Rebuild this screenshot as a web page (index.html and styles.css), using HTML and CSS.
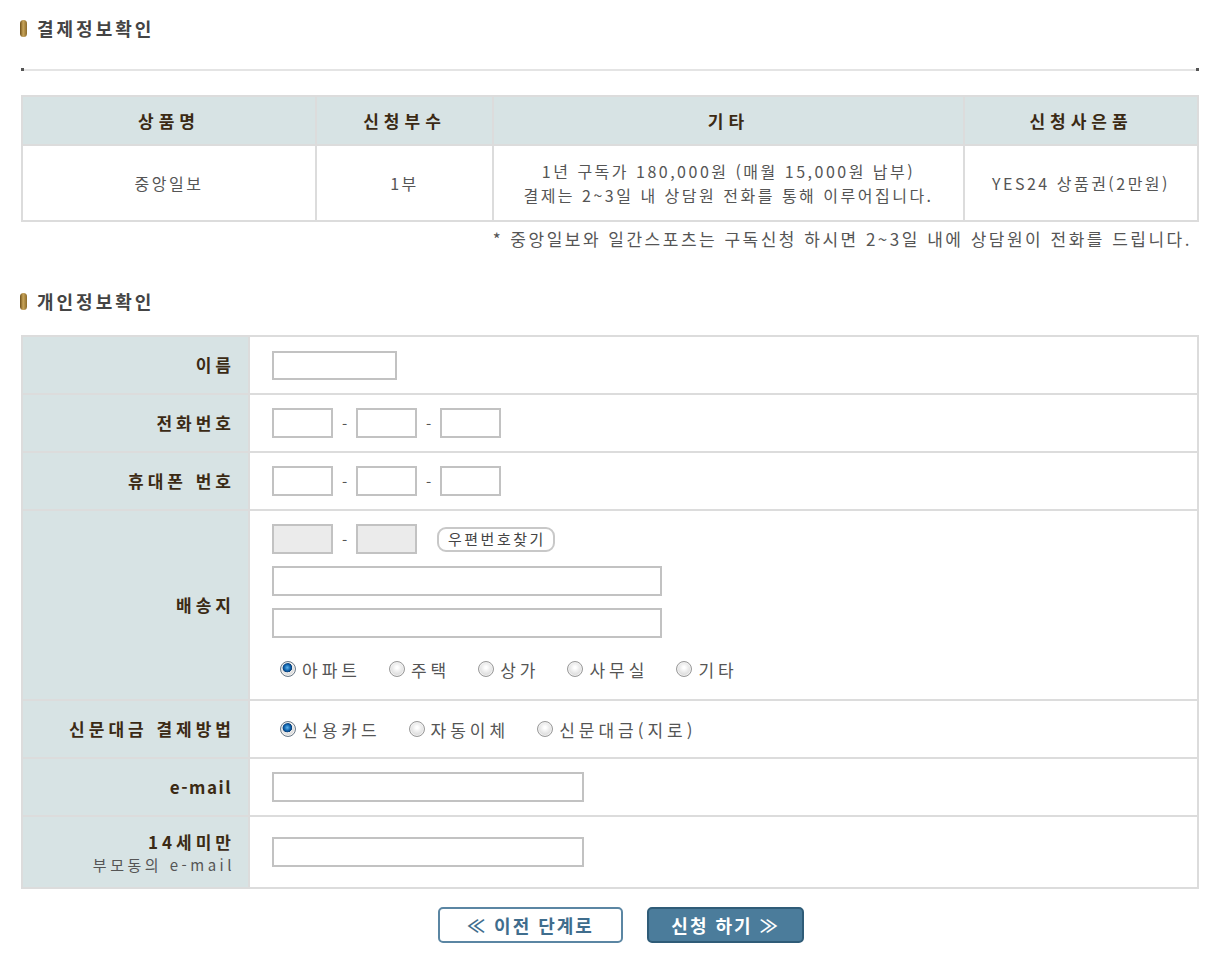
FILE: index.html
```html
<!DOCTYPE html>
<html lang="ko">
<head>
    <meta charset="UTF-8">
    <title>구독신청 - 결제정보확인</title>
    <link rel="stylesheet" href="styles.css">
</head>
<body>
    <div class="wrap">
        <h3 class="section-title"><span class="bullet"></span>결제정보확인</h3>
        <div class="dot-line"></div>

        <table class="order-table">
            <colgroup>
                <col style="width:294px">
                <col style="width:177px">
                <col style="width:471px">
                <col>
            </colgroup>
            <tr>
                <th>상품명</th>
                <th>신청부수</th>
                <th>기타</th>
                <th>신청사은품</th>
            </tr>
            <tr>
                <td>중앙일보</td>
                <td>1부</td>
                <td>
                    <div>1년 구독가 180,000원 (매월 15,000원 납부)</div>
                    <div>결제는 2~3일 내 상담원 전화를 통해 이루어집니다.</div>
                </td>
                <td>YES24 상품권(2만원)</td>
            </tr>
        </table>
        <p class="note">* 중앙일보와 일간스포츠는 구독신청 하시면 2~3일 내에 상담원이 전화를 드립니다.</p>

        <h3 class="section-title second"><span class="bullet"></span>개인정보확인</h3>

        <table class="form-table">
            <colgroup>
                <col class="label-col">
                <col>
            </colgroup>
            <tr>
                <th>이름</th>
                <td><input type="text" class="inp w-name"></td>
            </tr>
            <tr>
                <th>전화번호</th>
                <td>
                    <input type="text" class="inp w-tel"><span class="dash">-</span><input type="text" class="inp w-tel"><span class="dash">-</span><input type="text" class="inp w-tel">
                </td>
            </tr>
            <tr>
                <th>휴대폰 번호</th>
                <td>
                    <input type="text" class="inp w-tel"><span class="dash">-</span><input type="text" class="inp w-tel"><span class="dash">-</span><input type="text" class="inp w-tel">
                </td>
            </tr>
            <tr class="row-addr">
                <th>배송지</th>
                <td>
                    <div class="addr-line">
                        <input type="text" class="inp w-tel readonly" readonly><span class="dash">-</span><input type="text" class="inp w-tel readonly" readonly>
                        <button type="button" class="zip-btn">우편번호찾기</button>
                    </div>
                    <div class="addr-line"><input type="text" class="inp w-addr"></div>
                    <div class="addr-line"><input type="text" class="inp w-addr"></div>
                    <div class="radio-group">
                        <label><input type="radio" name="house" checked>아파트</label>
                        <label><input type="radio" name="house">주택</label>
                        <label><input type="radio" name="house">상가</label>
                        <label><input type="radio" name="house">사무실</label>
                        <label><input type="radio" name="house">기타</label>
                    </div>
                </td>
            </tr>
            <tr>
                <th>신문대금 결제방법</th>
                <td>
                    <div class="radio-group">
                        <label><input type="radio" name="pay" checked>신용카드</label>
                        <label><input type="radio" name="pay">자동이체</label>
                        <label><input type="radio" name="pay">신문대금(지로)</label>
                    </div>
                </td>
            </tr>
            <tr>
                <th class="latin">e-mail</th>
                <td><input type="text" class="inp w-mail"></td>
            </tr>
            <tr class="row-parent">
                <th><span class="main">14세미만</span><span class="sub">부모동의 e-mail</span></th>
                <td><input type="text" class="inp w-mail"></td>
            </tr>
        </table>

        <div class="btn-area">
            <a href="#" class="btn btn-prev">≪ 이전 단계로</a>
            <a href="#" class="btn btn-submit">신청 하기 ≫</a>
        </div>
    </div>
</body>
</html>
```

FILE: styles.css
```css
body {
    margin: 0;
    padding: 0;
    background-color: #fff;
    font-family: "Noto Sans CJK KR", "Noto Sans", sans-serif;
    font-size: 16px;
    color: #555;
}
.wrap {
    width: 1178px;
    margin-left: 21px;
}
.section-title {
    margin: 14px 0 0 0;
    height: 28px;
    line-height: 28px;
    font-size: 18px;
    letter-spacing: 3px;
    font-weight: bold;
    color: #444;
    display: flex;
    align-items: center;
}
.section-title.second {
    margin-top: 39px;
}
.bullet {
    display: inline-block;
    width: 7px;
    height: 17px;
    border-radius: 4px;
    margin: 0 10px 0 -1px;
    background: linear-gradient(to right, #6e4f18, #c9a55a 45%, #8b6a2a);
}
.dot-line {
    position: relative;
    margin-top: 27px;
    height: 2px;
    background-color: #e4e4e4;
}
.dot-line::before,
.dot-line::after {
    content: "";
    position: absolute;
    top: -1px;
    width: 3px;
    height: 3px;
    background-color: #555;
}
.dot-line::before { left: 0; }
.dot-line::after { right: 0; }

table {
    border-collapse: collapse;
    width: 100%;
}
.order-table {
    margin-top: 24px;
    table-layout: fixed;
}
.order-table th,
.order-table td {
    border: 2px solid #dcdcdc;
    text-align: center;
}
.order-table th {
    height: 47px;
    background-color: #d7e3e4;
    color: #3b2a14;
    font-size: 17px;
    letter-spacing: 5px;
    font-weight: bold;
    padding: 0;
}
.order-table td {
    height: 74px;
    padding: 0;
    font-size: 16px;
    letter-spacing: 2.5px;
    line-height: 24px;
    color: #555;
}
.note {
    margin: 8px 7px 0 0;
    text-align: right;
    font-size: 17px;
    letter-spacing: 2.5px;
    line-height: 18px;
    color: #555;
}

.form-table {
    margin-top: 20px;
    table-layout: fixed;
}
.form-table .label-col {
    width: 227px;
}
.form-table th,
.form-table td {
    border: 2px solid #dcdcdc;
    height: 56px;
    padding: 0;
}
.form-table th {
    padding-right: 13px;
    background-color: #d7e3e4;
    text-align: right;
    color: #3b2a14;
    font-size: 17px;
    letter-spacing: 4px;
    font-weight: bold;
    line-height: 24px;
}
.form-table th.latin {
    letter-spacing: 1.5px;
    padding-right: 16px;
}
.form-table td {
    padding-left: 22px;
    vertical-align: middle;
}
.form-table .main,
.form-table .sub {
    display: block;
}
.form-table .main {
    line-height: 25px;
}
.form-table .sub {
    font-weight: normal;
    font-size: 15px;
    letter-spacing: 3.5px;
    line-height: 22px;
    color: #555;
}
.row-addr th,
.row-addr td {
    height: 188px;
}
.row-addr td {
    vertical-align: top;
    padding-top: 13px;
    box-sizing: border-box;
}
.row-parent th,
.row-parent td {
    height: 70px;
}

.inp {
    box-sizing: border-box;
    height: 30px;
    border: 2px solid #c2c2c2;
    background-color: #fff;
    margin: 0;
    padding: 0 4px;
    vertical-align: middle;
    font-family: inherit;
    font-size: 14px;
}
.inp.readonly {
    background-color: #ebebeb;
}
.w-name { width: 125px; height: 29px; }
.w-tel { width: 61px; }
.w-addr { width: 390px; }
.w-mail { width: 312px; }
.dash {
    display: inline-block;
    width: 23px;
    text-align: center;
    vertical-align: middle;
    color: #555;
    font-size: 15px;
}
.addr-line {
    display: flex;
    align-items: center;
    margin-bottom: 12px;
}
.zip-btn {
    margin-left: 20px;
    height: 25px;
    padding: 0 7px 0 9px;
    border: 2px solid #c8c8c8;
    border-radius: 9px;
    background-color: #fff;
    color: #444;
    font-family: inherit;
    font-size: 15px;
    letter-spacing: 2.5px;
    line-height: 20px;
    cursor: pointer;
}
.radio-group {
    display: flex;
    align-items: center;
    gap: 28px;
    height: 30px;
    margin-left: 8px;
}
.row-addr .radio-group {
    margin-top: 16px;
}
.radio-group label {
    display: flex;
    align-items: center;
    font-size: 17px;
    letter-spacing: 4px;
    color: #555;
}
.radio-group input[type="radio"] {
    appearance: none;
    -webkit-appearance: none;
    width: 16px;
    height: 16px;
    margin: 0 6px 0 0;
    border: 1px solid #9a9a9a;
    border-radius: 50%;
    background: radial-gradient(circle at 50% 40%, #fff 10%, #d4d4d4 80%);
    box-shadow: inset 0 0 0 1px #f2f2f2;
}
.radio-group input[type="radio"]:checked {
    border-color: #6b7a88;
    background: radial-gradient(circle at 45% 40%, #5fb4ee 0, #0d5fa8 28%, #0b3f78 40%, #e8e8e8 44%, #c9c9c9 85%);
}

.btn-area {
    display: flex;
    justify-content: center;
    gap: 24px;
    margin: 18px 0 0 22px;
}
.btn {
    box-sizing: border-box;
    display: inline-flex;
    align-items: center;
    justify-content: center;
    height: 36px;
    border-radius: 5px;
    font-size: 18px;
    letter-spacing: 2px;
    font-weight: bold;
    text-decoration: none;
}
.btn-prev {
    width: 185px;
    border: 2px solid #5b86a3;
    background-color: #fff;
    color: #3f6d8d;
}
.btn-submit {
    width: 157px;
    border: 2px solid #2f5c78;
    background-color: #4b7c9b;
    color: #fff;
}
```
